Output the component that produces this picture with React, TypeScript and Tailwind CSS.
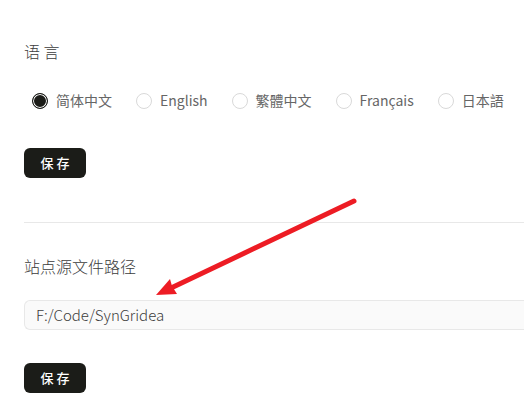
import { useState } from "react";

const languages = ["简体中文", "English", "繁體中文", "Français", "日本語"];

function SaveButton() {
  return (
    <button
      type="submit"
      className="block h-[30px] w-[62px] rounded-md bg-[#1b1c18] text-center text-[13px] leading-7 font-medium text-white"
    >
      保 存
    </button>
  );
}

export default function App() {
  const [language, setLanguage] = useState("简体中文");
  const [path, setPath] = useState("F:/Code/SynGridea");

  return (
    <main className="relative overflow-hidden bg-white pt-[39px] pb-6 pl-6 font-['Noto_Sans_CJK_SC',sans-serif] text-[#666]">
      <form onSubmit={(e) => e.preventDefault()}>
        <fieldset>
          <legend className="text-base leading-6 font-light text-[#3c3c3c]">语 言</legend>
          <div className="mt-[26px] flex gap-6 pl-2">
            {languages.map((name) => (
              <label key={name} className="flex h-6 shrink-0 items-center gap-2 text-sm leading-6">
                <input
                  type="radio"
                  name="language"
                  checked={language === name}
                  onChange={() => setLanguage(name)}
                  className="size-4 appearance-none rounded-full border border-[#d9d9d9] bg-white checked:border-[#1b1c18] checked:bg-[#1b1c18] checked:shadow-[inset_0_0_0_1px_white]"
                />
                <span className="pb-0.5">{name}</span>
              </label>
            ))}
          </div>
        </fieldset>
        <div className="mt-[35px]">
          <SaveButton />
        </div>
      </form>
      <hr className="mt-11 border-[#e8e8e8]" />
      <form className="mt-[31px]" onSubmit={(e) => e.preventDefault()}>
        <label htmlFor="source-path" className="block text-base leading-6 font-light text-[#3c3c3c]">
          站点源文件路径
        </label>
        <input
          id="source-path"
          type="text"
          value={path}
          onChange={(e) => setPath(e.target.value)}
          className="mt-[22px] block h-[30px] w-full rounded-l-md border border-r-0 border-[#e8e8e8] bg-[#fafafa] px-[11px] pb-0.5 text-[15px] font-light text-[#3c3c3c]"
        />
        <div className="mt-[33px]">
          <SaveButton />
        </div>
      </form>
      <svg
        className="pointer-events-none absolute top-[190px] left-[140px]"
        width="230"
        height="115"
        viewBox="140 190 230 115"
        aria-hidden="true"
      >
        <path d="M354 201 170 288.500" stroke="#ed1c24" strokeWidth="5" strokeLinecap="round" />
        <path d="M156 295 170 279 172 286 177 294Z" fill="#ed1c24" />
      </svg>
    </main>
  );
}
